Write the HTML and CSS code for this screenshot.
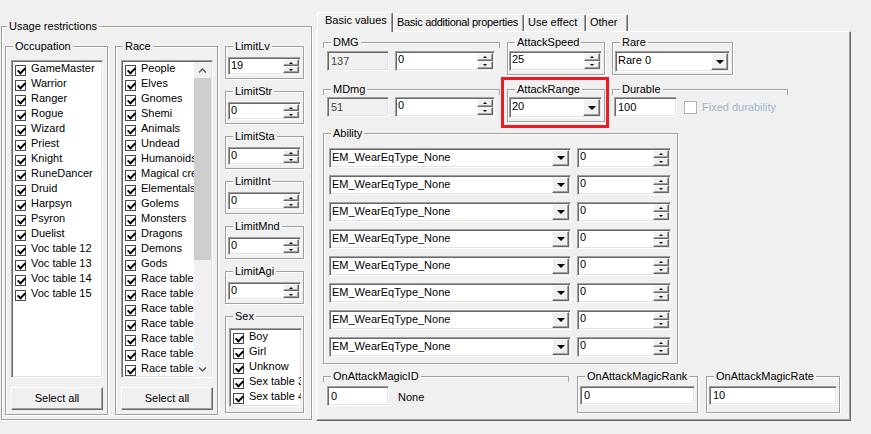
FILE: index.html
```html
<!DOCTYPE html>
<html lang="en">
<head>
  <meta charset="UTF-8" />
  <title>Item editor</title>
  <link rel="stylesheet" href="styles.css">
</head>
<body>

<div class="form">

  <div class="group usage">
    <span class="cap">Usage restrictions</span>
    <div class="usage-row">

      <div class="group listgrp">
        <span class="cap">Occupation</span>
        <div class="listbox sunken">
          <ul class="items">
            <li><span class="cb"></span>GameMaster</li>
            <li><span class="cb"></span>Warrior</li>
            <li><span class="cb"></span>Ranger</li>
            <li><span class="cb"></span>Rogue</li>
            <li><span class="cb"></span>Wizard</li>
            <li><span class="cb"></span>Priest</li>
            <li><span class="cb"></span>Knight</li>
            <li><span class="cb"></span>RuneDancer</li>
            <li><span class="cb"></span>Druid</li>
            <li><span class="cb"></span>Harpsyn</li>
            <li><span class="cb"></span>Psyron</li>
            <li><span class="cb"></span>Duelist</li>
            <li><span class="cb"></span>Voc table 12</li>
            <li><span class="cb"></span>Voc table 13</li>
            <li><span class="cb"></span>Voc table 14</li>
            <li><span class="cb"></span>Voc table 15</li>
          </ul>
        </div>
        <button type="button" class="btn raised">Select all</button>
      </div>

      <div class="group listgrp">
        <span class="cap">Race</span>
        <div class="listbox sunken">
          <ul class="items">
            <li><span class="cb"></span>People</li>
            <li><span class="cb"></span>Elves</li>
            <li><span class="cb"></span>Gnomes</li>
            <li><span class="cb"></span>Shemi</li>
            <li><span class="cb"></span>Animals</li>
            <li><span class="cb"></span>Undead</li>
            <li><span class="cb"></span>Humanoids</li>
            <li><span class="cb"></span>Magical creatures</li>
            <li><span class="cb"></span>Elementals</li>
            <li><span class="cb"></span>Golems</li>
            <li><span class="cb"></span>Monsters</li>
            <li><span class="cb"></span>Dragons</li>
            <li><span class="cb"></span>Demons</li>
            <li><span class="cb"></span>Gods</li>
            <li><span class="cb"></span>Race table 14</li>
            <li><span class="cb"></span>Race table 15</li>
            <li><span class="cb"></span>Race table 16</li>
            <li><span class="cb"></span>Race table 17</li>
            <li><span class="cb"></span>Race table 18</li>
            <li><span class="cb"></span>Race table 19</li>
            <li><span class="cb"></span>Race table 20</li>
          </ul>
          <div class="vscroll">
            <span class="sb-btn">
              <svg width="9" height="5" viewBox="0 0 9 5"><path d="M1 4.5 4.5 1 8 4.5" /></svg>
            </span>
            <span class="thumb"></span>
            <span class="track"></span>
            <span class="sb-btn">
              <svg width="9" height="5" viewBox="0 0 9 5"><path d="M1 0.5 4.5 4 8 0.5" /></svg>
            </span>
          </div>
        </div>
        <button type="button" class="btn raised">Select all</button>
      </div>

      <div class="limits">
        <div class="group limit">
          <span class="cap">LimitLv</span>
          <div class="spin sunken"><span class="val">19</span><span class="spinbtns"><i class="raised up"></i><i class="raised down"></i></span></div>
        </div>
        <div class="group limit">
          <span class="cap">LimitStr</span>
          <div class="spin sunken"><span class="val">0</span><span class="spinbtns"><i class="raised up"></i><i class="raised down"></i></span></div>
        </div>
        <div class="group limit">
          <span class="cap">LimitSta</span>
          <div class="spin sunken"><span class="val">0</span><span class="spinbtns"><i class="raised up"></i><i class="raised down"></i></span></div>
        </div>
        <div class="group limit">
          <span class="cap">LimitInt</span>
          <div class="spin sunken"><span class="val">0</span><span class="spinbtns"><i class="raised up"></i><i class="raised down"></i></span></div>
        </div>
        <div class="group limit">
          <span class="cap">LimitMnd</span>
          <div class="spin sunken"><span class="val">0</span><span class="spinbtns"><i class="raised up"></i><i class="raised down"></i></span></div>
        </div>
        <div class="group limit">
          <span class="cap">LimitAgi</span>
          <div class="spin sunken"><span class="val">0</span><span class="spinbtns"><i class="raised up"></i><i class="raised down"></i></span></div>
        </div>
        <div class="group sex">
          <span class="cap">Sex</span>
          <div class="listbox sunken">
            <ul class="items">
              <li><span class="cb"></span>Boy</li>
              <li><span class="cb"></span>Girl</li>
              <li><span class="cb"></span>Unknow</li>
              <li><span class="cb"></span>Sex table 3</li>
              <li><span class="cb"></span>Sex table 4</li>
            </ul>
          </div>
        </div>
      </div>

    </div>
  </div>

  <div class="tabctl">
    <div class="tabstrip">
      <div class="tab sel">Basic values</div>
      <div class="tab t-add">Basic additional properties</div>
      <div class="tab t-use">Use effect</div>
      <div class="tab t-other">Other</div>
    </div>

    <div class="page">

      <div class="prow">
        <div class="field">
          <div class="group open"><span class="cap">DMG</span></div>
          <div class="inputs">
            <div class="text sunken ro short">137</div>
            <div class="spin sunken wide"><span class="val">0</span><span class="spinbtns"><i class="raised up"></i><i class="raised down"></i></span></div>
          </div>
        </div>
        <div class="group box speed">
          <span class="cap">AttackSpeed</span>
          <div class="spin sunken"><span class="val">25</span><span class="spinbtns"><i class="raised up"></i><i class="raised down"></i></span></div>
        </div>
        <div class="group box rare">
          <span class="cap">Rare</span>
          <div class="combo sunken"><span class="val">Rare 0</span><span class="drop raised"></span></div>
        </div>
      </div>

      <div class="prow">
        <div class="field second">
          <div class="group open"><span class="cap">MDmg</span></div>
          <div class="inputs">
            <div class="text sunken ro short">51</div>
            <div class="spin sunken wide"><span class="val">0</span><span class="spinbtns"><i class="raised up"></i><i class="raised down"></i></span></div>
          </div>
        </div>
        <div class="group box range marked">
          <span class="cap">AttackRange</span>
          <div class="combo sunken"><span class="val">20</span><span class="drop raised"></span></div>
        </div>
        <div class="field second durable">
          <div class="group open"><span class="cap">Durable</span></div>
          <div class="inputs">
            <div class="text sunken dur">100</div>
            <span class="check-off"></span>
            <span class="disabled">Fixed durability</span>
          </div>
        </div>
      </div>

      <div class="group ability">
        <span class="cap">Ability</span>
        <div class="ability-rows">
          <div class="ability-row"><div class="combo sunken"><span class="val">EM_WearEqType_None</span><span class="drop raised"></span></div><div class="spin sunken"><span class="val">0</span><span class="spinbtns"><i class="raised up"></i><i class="raised down"></i></span></div></div>
          <div class="ability-row"><div class="combo sunken"><span class="val">EM_WearEqType_None</span><span class="drop raised"></span></div><div class="spin sunken"><span class="val">0</span><span class="spinbtns"><i class="raised up"></i><i class="raised down"></i></span></div></div>
          <div class="ability-row"><div class="combo sunken"><span class="val">EM_WearEqType_None</span><span class="drop raised"></span></div><div class="spin sunken"><span class="val">0</span><span class="spinbtns"><i class="raised up"></i><i class="raised down"></i></span></div></div>
          <div class="ability-row"><div class="combo sunken"><span class="val">EM_WearEqType_None</span><span class="drop raised"></span></div><div class="spin sunken"><span class="val">0</span><span class="spinbtns"><i class="raised up"></i><i class="raised down"></i></span></div></div>
          <div class="ability-row"><div class="combo sunken"><span class="val">EM_WearEqType_None</span><span class="drop raised"></span></div><div class="spin sunken"><span class="val">0</span><span class="spinbtns"><i class="raised up"></i><i class="raised down"></i></span></div></div>
          <div class="ability-row"><div class="combo sunken"><span class="val">EM_WearEqType_None</span><span class="drop raised"></span></div><div class="spin sunken"><span class="val">0</span><span class="spinbtns"><i class="raised up"></i><i class="raised down"></i></span></div></div>
          <div class="ability-row"><div class="combo sunken"><span class="val">EM_WearEqType_None</span><span class="drop raised"></span></div><div class="spin sunken"><span class="val">0</span><span class="spinbtns"><i class="raised up"></i><i class="raised down"></i></span></div></div>
          <div class="ability-row"><div class="combo sunken"><span class="val">EM_WearEqType_None</span><span class="drop raised"></span></div><div class="spin sunken"><span class="val">0</span><span class="spinbtns"><i class="raised up"></i><i class="raised down"></i></span></div></div>
        </div>
      </div>

      <div class="prow magic">
        <div class="field magic-id">
          <div class="group open"><span class="cap">OnAttackMagicID</span></div>
          <div class="inputs">
            <div class="text sunken short">0</div>
            <span class="magic-name">None</span>
          </div>
        </div>
        <div class="group box rank">
          <span class="cap">OnAttackMagicRank</span>
          <div class="text sunken">0</div>
        </div>
        <div class="group box rate">
          <span class="cap">OnAttackMagicRate</span>
          <div class="text sunken">10</div>
        </div>
      </div>

    </div>
  </div>

</div>

</body>
</html>
```

FILE: styles.css
```css
* { box-sizing: border-box; }
body {
  margin: 0;
  background: #f0f0f0;
  color: #000;
  font: 11px/13px "Liberation Sans", Arial, sans-serif;
}
.form { display: flex; align-items: flex-start; padding-left: 1px; }

/* group boxes: etched line with the caption sitting on it */
.group {
  border: 1px solid #a0a0a0;
  box-shadow: inset 1px 1px 0 #fff, 1px 1px 0 #fff;
}
.cap {
  display: block;
  width: max-content;
  margin: -7px 0 0 7px;
  padding: 0 2px;
  background: #f0f0f0;
  white-space: nowrap;
}
.group.open {
  height: 6px;
  border-bottom: 0;
  box-shadow: inset 1px 1px 0 #fff, 1px 0 0 #fff;
}

/* 3d borders */
.sunken {
  background: #fff;
  border: 1px solid;
  border-color: #a0a0a0 #fff #fff #a0a0a0;
  box-shadow: inset 1px 1px 0 #696969, inset -1px -1px 0 #e3e3e3;
}
.raised {
  background: #f0f0f0;
  border: 1px solid;
  border-color: #fff #696969 #696969 #fff;
  box-shadow: inset -1px -1px 0 #a0a0a0;
}

/* left side */
.usage { width: 311px; height: 394px; margin-top: 26px; }
.usage > .cap { margin-left: 5px; }
.usage-row { display: flex; gap: 7px; margin: 13px 0 0 3px; }
.listgrp { width: 103px; height: 369px; }
.listgrp .listbox { width: 92px; height: 318px; margin: 7px 0 0 5px; }
.btn {
  display: block;
  width: 92px;
  height: 23px;
  margin: 9px 0 0 5px;
  padding: 0;
  font: inherit;
  color: #000;
}

.listbox { display: flex; padding: 1px 0 0 1px; overflow: hidden; }
.items { flex: 1; min-width: 0; list-style: none; margin: 0; padding: 0; overflow: hidden; }
.items li { display: flex; height: 15px; white-space: nowrap; overflow: hidden; }
.cb {
  position: relative;
  flex: none;
  width: 11px;
  height: 11px;
  margin: 3px 5px 0 2px;
  border: 1px solid #4a4a4a;
  background: #fff;
}
.cb::after {
  content: "";
  position: absolute;
  left: 3px;
  top: 0;
  width: 3px;
  height: 6px;
  border: solid #000;
  border-width: 0 2px 2px 0;
  transform: rotate(45deg);
}

.vscroll { flex: none; width: 17px; margin-right: 1px; display: flex; flex-direction: column; background: #f0f0f0; }
.sb-btn { height: 16px; display: flex; align-items: center; justify-content: center; }
.sb-btn path { fill: none; stroke: #606060; stroke-width: 1.5; }
.thumb { height: 182px; background: #cdcdcd; }
.track { flex: 1; }

.limits { width: 79px; display: flex; flex-direction: column; gap: 12px; }
.limit { height: 33px; }
.limit .spin { width: 73px; height: 18px; margin: 4px 0 0 2px; }
.sex { height: 97px; }
.sex .listbox { width: 73px; height: 79px; margin: 5px 0 0 3px; }

/* inputs */
.spin, .combo, .text { display: flex; white-space: nowrap; overflow: hidden; }
.val { flex: 1; min-width: 0; padding: 1px 0 0 2px; overflow: hidden; }
.spin { height: 20px; }
.spinbtns { flex: none; width: 16px; margin: 1px 1px 1px 0; display: flex; flex-direction: column; }
.spinbtns i { flex: 1; position: relative; }
.spinbtns i::after {
  content: "";
  position: absolute;
  left: 50%;
  top: 50%;
  margin: -1px 0 0 -2px;
  border: solid transparent;
}
.spinbtns .up::after { border-width: 0 2px 2px; border-bottom-color: #000; }
.spinbtns .down::after { border-width: 2px 2px 0; border-top-color: #000; }

.combo { height: 20px; }
.combo .val { padding-top: 2px; }
.drop { flex: none; width: 17px; margin: 1px; position: relative; }
.drop::after {
  content: "";
  position: absolute;
  left: 50%;
  top: 50%;
  margin: -2px 0 0 -4px;
  border: solid transparent;
  border-width: 4px 4px 0;
  border-top-color: #000;
}

.text { height: 20px; padding: 3px 0 0 3px; }
.text.ro { background: #f0f0f0; color: #444; }

/* tab control */
.tabctl { width: 535px; margin: 12px 0 0 4px; }
.tabstrip { display: flex; align-items: flex-end; height: 19px; padding-left: 1px; }
.tab {
  height: 17px;
  padding: 1px 0 0 3px;
  border: 1px solid;
  border-bottom: 0;
  border-color: #fff #696969 #fff #fff;
  border-radius: 2px 2px 0 0;
  box-shadow: inset -1px 0 0 #a0a0a0;
  white-space: nowrap;
  overflow: hidden;
}
.tab.sel {
  position: relative;
  z-index: 1;
  width: 76px;
  height: 20px;
  margin-bottom: -1px;
  padding: 1px 0 0 7px;
  background: #f0f0f0;
}
.t-add { width: 131px; letter-spacing: -0.3px; }
.t-use { width: 62px; }
.t-other { width: 42px; }

.page {
  height: 390px;
  padding: 10px 0 0 6px;
  border: 1px solid;
  border-color: #fff #696969 #696969 #fff;
  box-shadow: inset -1px -1px 0 #a0a0a0;
}
.prow { display: flex; gap: 7px; align-items: flex-start; }
.prow + .prow { margin-top: 14px; }

.field { width: 177px; }
.field .inputs { display: flex; align-items: flex-start; gap: 6px; margin: 3px 0 0 4px; }
.field.second .inputs { margin-top: 2px; }
.short { width: 62px; }
.wide { width: 100px; }

.box { height: 33px; position: relative; }
.box .spin, .box .combo { margin: 2px 0 0 1px; }
.speed { width: 98px; }
.speed .spin { width: 93px; }
.rare { width: 121px; }
.rare .combo { width: 115px; height: 21px; margin-left: 2px; }
.range { width: 98px; }
.range .combo { width: 93px; height: 21px; margin-top: 1px; }
.marked::after {
  content: "";
  position: absolute;
  left: -7px;
  top: -13px;
  right: -5px;
  bottom: -7px;
  border: 3px solid #ed1c24;
}

.durable { width: 176px; }
.durable .inputs { gap: 0; margin-left: 2px; }
.dur { width: 63px; }
.check-off {
  flex: none;
  width: 13px;
  height: 13px;
  margin: 4px 5px 0 7px;
  border: 1px solid #b5b5b5;
  background: #fff;
}
.disabled { color: #a3b3c7; padding-top: 4px; }

.ability { width: 355px; height: 231px; margin-top: 11px; }
.ability-rows { display: flex; flex-direction: column; gap: 7px; margin: 8px 0 0 5px; }
.ability-row { display: flex; gap: 6px; }
.ability-row .combo { width: 242px; }
.ability-row .spin { width: 94px; }

.prow.magic { margin-top: 12px; gap: 8px; }
.magic-id { width: 246px; }
.magic-id .inputs { gap: 9px; margin-top: 4px; }
.magic-name { padding-top: 5px; }
.rank { width: 121px; height: 37px; }
.rate { width: 134px; height: 37px; }
.rank .text, .rate .text { height: 19px; margin: 3px 0 0 2px; padding-top: 2px; }
.rank .text { width: 115px; }
.rate .text { width: 128px; }
```
